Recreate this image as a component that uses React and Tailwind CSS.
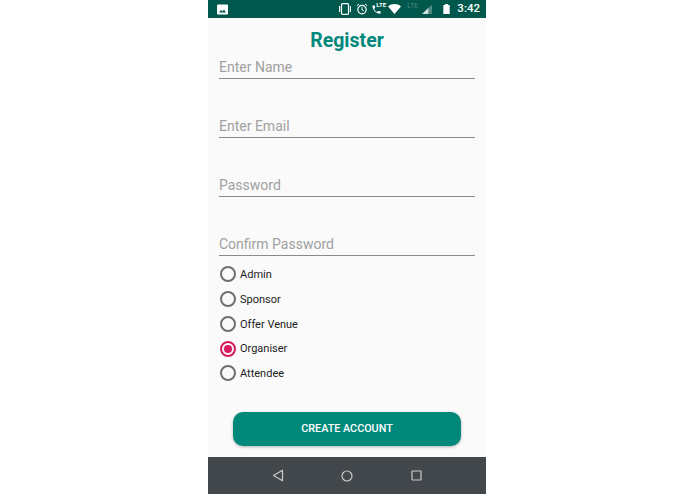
const roles = ['Admin', 'Sponsor', 'Offer Venue', 'Organiser', 'Attendee']
const fields = ['Enter Name', 'Enter Email', 'Password', 'Confirm Password']

function StatusBar() {
  return (
    <div className="h-[18px] bg-[#00574b] flex items-center pl-[9px] pr-[6px] text-white">
      {/* image notification */}
      <svg width="11" height="11" viewBox="0 0 11 11">
        <rect x="0" y="0.5" width="11" height="10" rx="1" fill="#fff" />
        <path d="M2 8.5 L4 6 L5.5 7.5 L7 5.5 L9 8.5 Z" fill="#00574b" />
      </svg>
      <div className="flex-1" />
      {/* vibrate */}
      <svg width="14" height="12" viewBox="0 0 14 12" fill="none" stroke="#fff" className="mr-[4px]">
        <rect x="3.5" y="0.7" width="7" height="10.6" rx="1" strokeWidth="1.2" />
        <path d="M1.6 3v6M12.4 3v6" strokeWidth="1.1" />
      </svg>
      {/* alarm */}
      <svg width="12" height="12" viewBox="0 0 12 12" fill="none" stroke="#fff" className="mr-[3px]">
        <circle cx="6" cy="6.6" r="4.2" strokeWidth="1.2" />
        <path d="M6 4.2v2.6l1.8 1M0.8 2.8L3 1M11.2 2.8L9 1" strokeWidth="1" />
      </svg>
      {/* call with LTE */}
      <div className="relative w-[14px] h-[12px] mr-[3px]">
        <svg width="11" height="11" viewBox="0 0 24 24" fill="#fff" className="absolute left-0 top-[1px]">
          <path d="M6.6 10.8c1.4 2.8 3.8 5.1 6.6 6.6l2.2-2.2c.3-.3.7-.4 1-.2 1.1.4 2.3.6 3.6.6.6 0 1 .4 1 1V20c0 .6-.4 1-1 1C10.6 21 3 13.4 3 4c0-.6.4-1 1-1h3.5c.6 0 1 .4 1 1 0 1.3.2 2.5.6 3.6.1.3 0 .7-.2 1l-2.3 2.2z" />
        </svg>
        <span className="absolute left-[5px] top-[-2px] text-[6px] leading-[8px] font-bold">LTE</span>
      </div>
      {/* wifi */}
      <svg width="13" height="10" viewBox="0 0 13 10" className="mr-[6px]">
        <path d="M0 2.4C3.8-.8 9.2-.8 13 2.4L6.5 10z" fill="#fff" />
      </svg>
      {/* dim LTE + signal */}
      <span className="text-[7px] leading-none text-white/30 mr-[4px] mb-[5px]">LTE</span>
      <svg width="10" height="10" viewBox="0 0 11 11" className="mr-[11px]">
        <path d="M11 0.5V11H0z" fill="#fff" fillOpacity="0.3" />
        <path d="M7 4.5V11H0z" fill="#fff" fillOpacity="0.75" />
      </svg>
      {/* battery */}
      <svg width="7" height="10" viewBox="0 0 7 11" className="mr-[7px]">
        <path d="M2 0h3v1h2v10H0V1h2z" fill="#fff" />
      </svg>
      <span className="text-[11.5px] leading-none font-medium">3:42</span>
    </div>
  )
}

function Radio({ label, checked }) {
  return (
    <div className="h-[24.75px] flex items-center pl-[12px]">
      <div className={`w-[16px] h-[16px] rounded-full border-[2px] flex items-center justify-center ${checked ? 'border-[#d81b60]' : 'border-[#6f6f6f]'}`}>
        {checked && <div className="w-[8px] h-[8px] rounded-full bg-[#d81b60]" />}
      </div>
      <span className="ml-[4px] pt-[2px] text-[11px] text-[#1c1c1c]">{label}</span>
    </div>
  )
}

export default function App() {
  return (
    <div className="w-[695px] h-[494px] bg-white flex justify-center font-['Roboto',sans-serif]">
      <div className="w-[278px] h-full flex flex-col bg-[#fafafa] ml-[-1px]">
        <StatusBar />
        <div className="flex-1 flex flex-col">
          <h1 className="h-[26px] mt-[10px] pt-[1px] text-center text-[19.5px] leading-[24px] font-bold text-[#00897b]">Register</h1>
          <div className="px-[11px]">
            {fields.map((f, i) => (
              <div key={f} className={`h-[25px] border-b border-[#8a8a8a] text-[14px] leading-[14px] pt-[6px] text-[#a0a0a0] ${i > 0 ? 'mt-[34px]' : ''}`}>
                {f}
              </div>
            ))}
          </div>
          <div className="mt-[6px]">
            {roles.map(r => <Radio key={r} label={r} checked={r === 'Organiser'} />)}
          </div>
          <div className="mt-[26px] mx-[25px] h-[34px] pt-[1px] rounded-[10px] bg-[#00897b] shadow-[0_1px_3px_rgba(0,0,0,0.3)] flex items-center justify-center text-white text-[10.8px] font-medium">
            CREATE ACCOUNT
          </div>
        </div>
        <div className="h-[37px] bg-[#42474c] flex items-center justify-center">
          <div className="flex items-center">
            <svg width="12" height="13" viewBox="0 0 12 13" fill="none" stroke="#c9cbcd" strokeWidth="1.2" className="mr-[57px]">
              <path d="M10.5 1.2V11.8L1.5 6.5z" strokeLinejoin="round" />
            </svg>
            <svg width="12" height="12" viewBox="0 0 12 12" fill="none" stroke="#c9cbcd" strokeWidth="1.2" className="mr-[58px]">
              <circle cx="6" cy="6" r="5" />
            </svg>
            <svg width="11" height="11" viewBox="0 0 11 11" fill="none" stroke="#c9cbcd" strokeWidth="1.2">
              <rect x="1" y="1" width="9" height="9" rx="0.5" />
            </svg>
          </div>
        </div>
      </div>
    </div>
  )
}
